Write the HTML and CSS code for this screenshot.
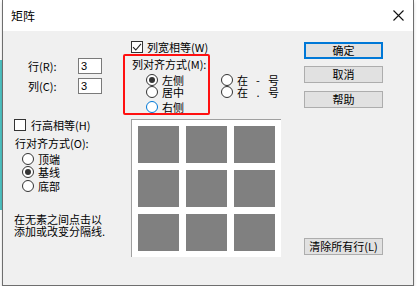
FILE: index.html
```html
<!DOCTYPE html>
<html lang="zh">
<head>
<meta charset="utf-8">
<title>矩阵</title>
<link rel="stylesheet" href="styles.css">
</head>
<body>
<div class="dialog">
  <div class="titlebar">
    <span class="title">矩阵</span>
    <svg class="close" width="11" height="11" viewBox="0 0 11 11"><path d="M0.5 0.5L10.5 10.5M10.5 0.5L0.5 10.5" stroke="#111" stroke-width="1.1" fill="none"/></svg>
  </div>
  <div class="content">
    <div class="col-left">
      <div class="dim-row"><span class="dim-label">行(R):</span><span class="input">3</span></div>
      <div class="dim-row second"><span class="dim-label">列(C):</span><span class="input">3</span></div>
      <div class="check rowcheck"><span class="box"></span><span>行高相等(H)</span></div>
      <div class="legend rowlegend">行对齐方式(O):</div>
      <div class="rowradios">
        <div class="radio"><span class="dot"></span><span>顶端</span></div>
        <div class="radio checked r2"><span class="dot"></span><span>基线</span></div>
        <div class="radio r3"><span class="dot"></span><span>底部</span></div>
      </div>
      <p class="hint">在无素之间点击以<br>添加或改变分隔线.</p>
    </div>
    <div class="col-mid">
      <div class="check colcheck"><span class="box"><svg width="10" height="10" viewBox="0 0 10 10"><path d="M1 5.2L3.8 8L9 1.8" stroke="#222" stroke-width="1.1" fill="none"/></svg></span><span>列宽相等(W)</span></div>
      <div class="align-row">
        <div class="frame">
          <div class="legend">列对齐方式(M):</div>
          <div class="colradios">
            <div class="radio checked"><span class="dot"></span><span>左侧</span></div>
            <div class="radio"><span class="dot"></span><span>居中</span></div>
            <div class="radio focus r3c"><span class="dot"></span><span>右侧</span></div>
          </div>
        </div>
        <div class="sideradios">
          <div class="radio"><span class="dot"></span><span class="sym">在<i>-</i>号</span></div>
          <div class="radio"><span class="dot"></span><span class="sym">在<i>.</i>号</span></div>
        </div>
      </div>
      <div class="preview">
        <span class="cell"></span><span class="cell"></span><span class="cell"></span>
        <span class="cell"></span><span class="cell"></span><span class="cell"></span>
        <span class="cell"></span><span class="cell"></span><span class="cell"></span>
      </div>
    </div>
    <div class="col-right">
      <button class="btn default">确定</button>
      <button class="btn cancel">取消</button>
      <button class="btn help">帮助</button>
      <button class="btn clear">清除所有行(L)</button>
    </div>
  </div>
</div>
</body>
</html>
```

FILE: styles.css
```css
html {
  background:
    linear-gradient(#4fc4c4, #4fc4c4) 0 60px / 2px 150px no-repeat,
    #ffffff;
}
body {
  margin: 0;
  font-family: "Noto Sans CJK SC", "Liberation Sans", sans-serif;
  font-size: 11px;
  line-height: 12px;
  color: #000;
}
.dialog {
  box-sizing: border-box;
  width: 412px;
  height: 286px;
  margin-left: 2px;
  border: 1px solid #6e6e6e;
  border-top: 0;
  background: #f0f0f0;
  box-shadow: 0 2px 3px rgba(0, 0, 0, 0.18);
}
.titlebar {
  height: 31px;
  background: #fff;
  display: flex;
  align-items: center;
  justify-content: space-between;
  padding: 0 8px 0 8px;
}
.title {
  font-size: 12px;
  line-height: 14px;
  color: #000;
}
.close {
  display: block;
  margin-right: 1px;
}
.content {
  display: flex;
  height: 254px;
}
.col-left {
  width: 120px;
  padding-top: 27px;
  box-sizing: border-box;
}
.dim-row {
  display: flex;
  align-items: center;
  height: 16px;
  margin-left: 25px;
}
.dim-row.second {
  margin-top: 4px;
}
.dim-label {
  width: 50px;
}
.input {
  box-sizing: border-box;
  width: 24px;
  height: 16px;
  border: 1px solid #7a7a7a;
  background: #fff;
  padding-left: 2px;
  font-family: "Liberation Sans", sans-serif;
  font-size: 11px;
  line-height: 14px;
}
.check {
  display: flex;
  align-items: center;
  height: 12px;
  gap: 5px;
}
.box {
  box-sizing: border-box;
  width: 12px;
  height: 12px;
  border: 1px solid #333;
  background: #fff;
  display: flex;
  align-items: center;
  justify-content: center;
}
.rowcheck {
  margin-top: 25px;
  margin-left: 11px;
}
.legend {
  height: 12px;
  white-space: nowrap;
}
.rowlegend {
  margin-top: 6px;
  margin-left: 12px;
}
.rowradios {
  margin-top: 4px;
  margin-left: 19px;
}
.radio {
  display: flex;
  align-items: center;
  gap: 4px;
  height: 12px;
  white-space: nowrap;
}
.dot {
  box-sizing: border-box;
  width: 12px;
  height: 12px;
  border: 1px solid #333;
  border-radius: 50%;
  background: #fff;
  display: flex;
  align-items: center;
  justify-content: center;
}
.radio.checked .dot::after {
  content: "";
  width: 6px;
  height: 6px;
  border-radius: 50%;
  background: #333;
}
.radio.focus .dot {
  border-color: #0078d7;
}
.rowradios .r2 {
  margin-top: 1px;
}
.rowradios .r3 {
  margin-top: 2px;
}
.hint {
  margin: 21px 0 0 11px;
  line-height: 12px;
  white-space: nowrap;
}
.col-mid {
  width: 181px;
  padding-top: 10px;
  box-sizing: border-box;
}
.colcheck {
  margin-left: 8px;
  gap: 4px;
}
.align-row {
  display: flex;
  margin-top: 1px;
}
.frame {
  box-sizing: border-box;
  width: 87px;
  height: 61px;
  border: 2px solid #ff1010;
  border-radius: 2px;
  padding: 2px 0 0 7px;
}
.colradios {
  margin-top: 4px;
  margin-left: 14px;
}
.colradios .r3c {
  margin-top: 3px;
}
.sideradios {
  margin-top: 20px;
  margin-left: 11px;
}
.sym i {
  font-style: normal;
  display: inline-block;
  width: 20px;
  text-align: center;
}
.preview {
  box-sizing: border-box;
  width: 150px;
  height: 138px;
  margin: 4px 0 0 8px;
  background: #fff;
  border-top: 1px solid #a0a0a0;
  border-left: 1px solid #a0a0a0;
  padding: 6px 0 0 6px;
  display: grid;
  grid-template-columns: repeat(3, 41px);
  grid-auto-rows: 37px;
  gap: 7px;
}
.cell {
  background: #808080;
}
.col-right {
  width: 79px;
  padding-top: 11px;
  display: flex;
  flex-direction: column;
}
.btn {
  box-sizing: border-box;
  width: 79px;
  height: 17px;
  padding: 0;
  background: #e1e1e1;
  border: 1px solid #adadad;
  font-family: "Noto Sans CJK SC", sans-serif;
  font-size: 11px;
  line-height: 13px;
  color: #000;
}
.btn.default {
  border: 2px solid #0078d7;
}
.btn.cancel {
  margin-top: 7px;
}
.btn.help {
  margin-top: 8px;
}
.btn.clear {
  margin-top: 130px;
}
```
